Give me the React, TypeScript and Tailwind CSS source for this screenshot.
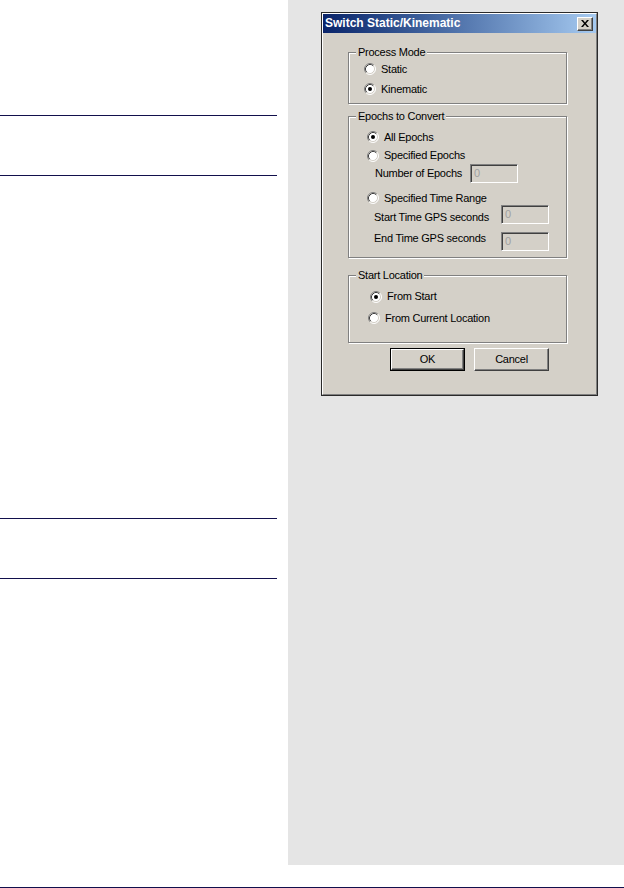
import React from "react";

function Radio({ checked }: { checked?: boolean }) {
  return (
    <svg width="12" height="12" viewBox="0 0 12 12" className="shrink-0">
      <circle cx="6" cy="6" r="5" fill="#fff" />
      <path d="M2.11 9.89A5.5 5.5 0 0 1 9.89 2.11" stroke="#808080" fill="none" />
      <path d="M9.89 2.11A5.5 5.5 0 0 1 2.11 9.89" stroke="#fff" fill="none" />
      <path d="M2.82 9.18A4.5 4.5 0 0 1 9.18 2.82" stroke="#404040" fill="none" />
      <path d="M9.18 2.82A4.5 4.5 0 0 1 2.82 9.18" stroke="#d4d0c8" fill="none" />
      {checked && <circle cx="6" cy="6" r="2" fill="#000" />}
    </svg>
  );
}

function Field({ w }: { w: string }) {
  return (
    <div
      className={`${w} h-[19px] shrink-0 border border-t-[#808080] border-l-[#808080] border-b-white border-r-white bg-[#d4d0c8] shadow-[inset_1px_1px_0_#404040,inset_-1px_-1px_0_#d4d0c8] pl-[3px] text-[#a0a0a0] leading-[17px]`}
    >
      0
    </div>
  );
}

function Legend({ children }: { children: React.ReactNode }) {
  return (
    <span className="absolute left-[7px] top-[-7px] bg-[#d4d0c8] px-[2px] leading-[13px] text-black">
      {children}
    </span>
  );
}

export default function App() {
  return (
    <div className="w-[624px] h-[888px] bg-white flex flex-col font-['Liberation_Sans',Arial,sans-serif] text-[11px] tracking-[-0.25px] text-black overflow-hidden">
      <div className="flex h-[887px]">
        {/* left column */}
        <div className="w-[288px] shrink-0 flex flex-col pt-[115px]">
          <div className="w-[277px] h-[1px] bg-[#12104c]" />
          <div className="w-[277px] h-[1px] bg-[#12104c] mt-[59px]" />
          <div className="w-[277px] h-[1px] bg-[#12104c] mt-[342px]" />
          <div className="w-[277px] h-[1px] bg-[#12104c] mt-[59px]" />
        </div>
        {/* right gray panel */}
        <div className="w-[336px] h-[865px] bg-[#e5e5e5] pl-[33px] pt-[12px]">
          <div className="w-[277px] h-[384px] border border-[#2a2a2a] bg-[#d4d0c8]">
            <div className="h-full border border-t-white border-l-white border-b-[#808080] border-r-[#808080] flex flex-col">
              {/* title bar */}
              <div className="h-[19px] shrink-0 flex items-center bg-gradient-to-r from-[#0a246a] to-[#a6caf0] pl-[2px] pr-[3px]">
                <span className="text-white font-bold text-[12px] tracking-normal leading-[19px]">Switch Static/Kinematic</span>
                <div className="ml-auto w-[16px] h-[14px] bg-[#d4d0c8] border border-t-white border-l-white border-b-[#404040] border-r-[#404040] shadow-[inset_-1px_-1px_0_#808080] flex items-center justify-center">
                  <svg width="8" height="7" viewBox="0 0 8 7">
                    <path d="M0 0h2l2 2.5L6 0h2L5 3.5 8 7H6L4 4.5 2 7H0l3-3.5z" fill="#000" />
                  </svg>
                </div>
              </div>

              {/* Process Mode */}
              <div className="relative mt-[19px] ml-[25px] w-[219px] h-[52px] border border-[#808080] shadow-[inset_1px_1px_0_#fff,1px_1px_0_#fff]">
                <Legend>Process Mode</Legend>
                <div className="mt-[6px] h-[20px] pl-[15px] flex items-center gap-[5px]">
                  <Radio />
                  <span>Static</span>
                </div>
                <div className="h-[20px] pl-[15px] flex items-center gap-[5px]">
                  <Radio checked />
                  <span>Kinematic</span>
                </div>
              </div>

              {/* Epochs to Convert */}
              <div className="relative mt-[12px] ml-[25px] w-[219px] h-[142px] border border-[#808080] shadow-[inset_1px_1px_0_#fff,1px_1px_0_#fff]">
                <Legend>Epochs to Convert</Legend>
                <div className="mt-[10px] h-[20px] pl-[18px] flex items-center gap-[5px]">
                  <Radio checked />
                  <span>All Epochs</span>
                </div>
                <div className="h-[17px] pl-[18px] flex items-center gap-[5px]">
                  <Radio />
                  <span>Specified Epochs</span>
                </div>
                <div className="h-[19px] pl-[26px] flex items-center">
                  <span className="w-[95px] shrink-0">Number of Epochs</span>
                  <Field w="w-[48px]" />
                </div>
                <div className="mt-[8px] h-[14px] pl-[18px] flex items-center gap-[5px]">
                  <Radio />
                  <span>Specified Time Range</span>
                </div>
                <div className="h-[19px] pl-[25px] flex items-center">
                  <span className="w-[127px] shrink-0 pt-[6px]">Start Time GPS seconds</span>
                  <Field w="w-[48px]" />
                </div>
                <div className="mt-[8px] h-[19px] pl-[25px] flex items-center">
                  <span className="w-[127px] shrink-0 pb-[6px]">End Time GPS seconds</span>
                  <Field w="w-[48px]" />
                </div>
              </div>

              {/* Start Location */}
              <div className="relative mt-[17px] ml-[25px] w-[219px] h-[68px] border border-[#808080] shadow-[inset_1px_1px_0_#fff,1px_1px_0_#fff]">
                <Legend>Start Location</Legend>
                <div className="mt-[10px] h-[21px] pl-[21px] flex items-center gap-[5px]">
                  <Radio checked />
                  <span>From Start</span>
                </div>
                <div className="h-[22px] pl-[19px] flex items-center gap-[5px]">
                  <Radio />
                  <span>From Current Location</span>
                </div>
              </div>

              {/* Buttons */}
              <div className="mt-[5px] flex">
                <div className="ml-[67px] w-[75px] h-[23px] border border-black">
                  <div className="h-full border border-t-white border-l-white border-b-[#404040] border-r-[#404040] shadow-[inset_-1px_-1px_0_#808080] flex items-center justify-center">
                    OK
                  </div>
                </div>
                <div className="ml-[9px] w-[75px] h-[23px] border border-t-white border-l-white border-b-[#404040] border-r-[#404040] shadow-[inset_-1px_-1px_0_#808080] flex items-center justify-center">
                  Cancel
                </div>
              </div>
            </div>
          </div>
        </div>
      </div>
      <div className="h-[1px] w-full bg-[#12104c]" />
    </div>
  );
}
